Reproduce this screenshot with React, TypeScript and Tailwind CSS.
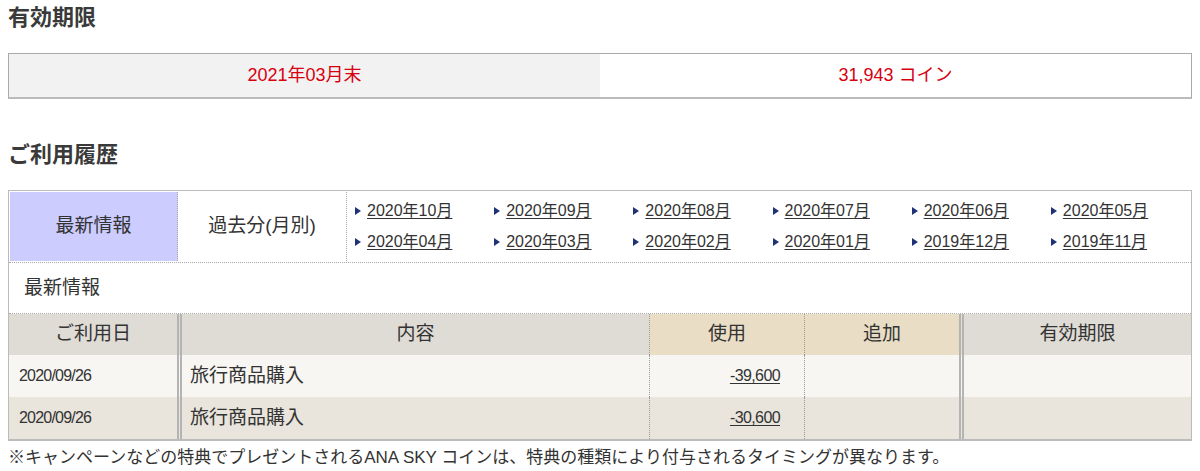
const months = [
  "2020年10月",
  "2020年09月",
  "2020年08月",
  "2020年07月",
  "2020年06月",
  "2020年05月",
  "2020年04月",
  "2020年03月",
  "2020年02月",
  "2020年01月",
  "2019年12月",
  "2019年11月",
];

const rows = [
  { date: "2020/09/26", desc: "旅行商品購入", used: "-39,600", bg: "bg-[#f7f6f2]" },
  { date: "2020/09/26", desc: "旅行商品購入", used: "-30,600", bg: "bg-[#e9e5dc]" },
];

function Arrow() {
  return (
    <svg width="6" height="8" viewBox="0 0 6 8" className="shrink-0">
      <path d="M0 0 L6 4 L0 8 Z" fill="#1f3275" />
    </svg>
  );
}

export default function App() {
  return (
    <div className="min-h-[471px] bg-white px-[8px] font-['Liberation_Sans','Noto_Sans_CJK_JP',sans-serif] text-[#333]">
      <h2 className="pt-[5px] text-[22px] font-bold leading-[26px] text-[#3a3a3a]">有効期限</h2>

      <div className="mt-[22px] flex h-[46px] border border-b-2 border-[#aaa] border-b-[#bbb] text-[18px] text-[#d7000f]">
        <div className="flex w-[591px] items-center justify-center bg-[#f2f2f2]">2021年03月末</div>
        <div className="flex flex-1 items-center justify-center bg-white">31,943 コイン</div>
      </div>

      <h2 className="mt-[43px] text-[22px] font-bold leading-[26px] text-[#3a3a3a]">ご利用履歴</h2>

      <section className="mt-[22px] border border-b-2 border-[#bbb]">
        <div className="flex h-[72px] border-b border-dotted border-[#aaa] p-[1px]">
          <div className="flex w-[168px] items-center justify-center border-r border-dotted border-[#aaa] bg-[#ccccff] text-[19px]">
            最新情報
          </div>
          <div className="flex w-[169px] items-center justify-center border-r border-dotted border-[#aaa] text-[19px]">
            過去分(月別)
          </div>
          <div className="grid flex-1 grid-cols-6 content-center gap-y-[11px] pl-[8px]">
            {months.map((m) => (
              <a key={m} href="#" className="flex items-center gap-[6px] text-[16px] leading-[20px] text-[#333] underline underline-offset-2">
                <Arrow />
                <span>{m}</span>
              </a>
            ))}
          </div>
        </div>

        <div className="flex h-[51px] items-center border-b border-dotted border-[#aaa] pl-[15px] text-[19px]">
          最新情報
        </div>

        <div className="grid grid-cols-[173px_468px_155px_159px_1fr] text-[19px]">
          <div className="flex h-[41px] items-center justify-center border-r-[5px] border-double border-[#b4b4b4] bg-[#dfdbd5]">ご利用日</div>
          <div className="flex h-[41px] items-center justify-center border-r border-dotted border-[#999] bg-[#dfdbd5]">内容</div>
          <div className="flex h-[41px] items-center justify-center border-r border-dotted border-[#999] bg-[#e9ddc5]">使用</div>
          <div className="flex h-[41px] items-center justify-center border-r-[5px] border-double border-[#b4b4b4] bg-[#e9ddc5]">追加</div>
          <div className="flex h-[41px] items-center justify-center bg-[#dfdbd5]">有効期限</div>

          {rows.map((r, i) => (
            <div key={i} className="contents">
              <div className={`flex h-[42px] items-center border-r-[5px] border-double border-[#b4b4b4] pl-[10px] text-[16px] tracking-[-0.8px] ${r.bg}`}>{r.date}</div>
              <div className={`flex h-[42px] items-center border-r border-dotted border-[#999] pl-[8px] ${r.bg}`}>{r.desc}</div>
              <div className={`flex h-[42px] items-center justify-end border-r border-dotted border-[#999] pr-[24px] text-[16px] tracking-[-0.6px] ${r.bg}`}>
                <a href="#" className="text-[#333] underline underline-offset-2">{r.used}</a>
              </div>
              <div className={`h-[42px] border-r-[5px] border-double border-[#b4b4b4] ${r.bg}`} />
              <div className={`h-[42px] ${r.bg}`} />
            </div>
          ))}
        </div>
      </section>

      <p className="mt-[7px] text-[17px] leading-[20px] text-[#333]">
        ※キャンペーンなどの特典でプレゼントされるANA SKY コインは、特典の種類により付与されるタイミングが異なります。
      </p>
    </div>
  );
}
